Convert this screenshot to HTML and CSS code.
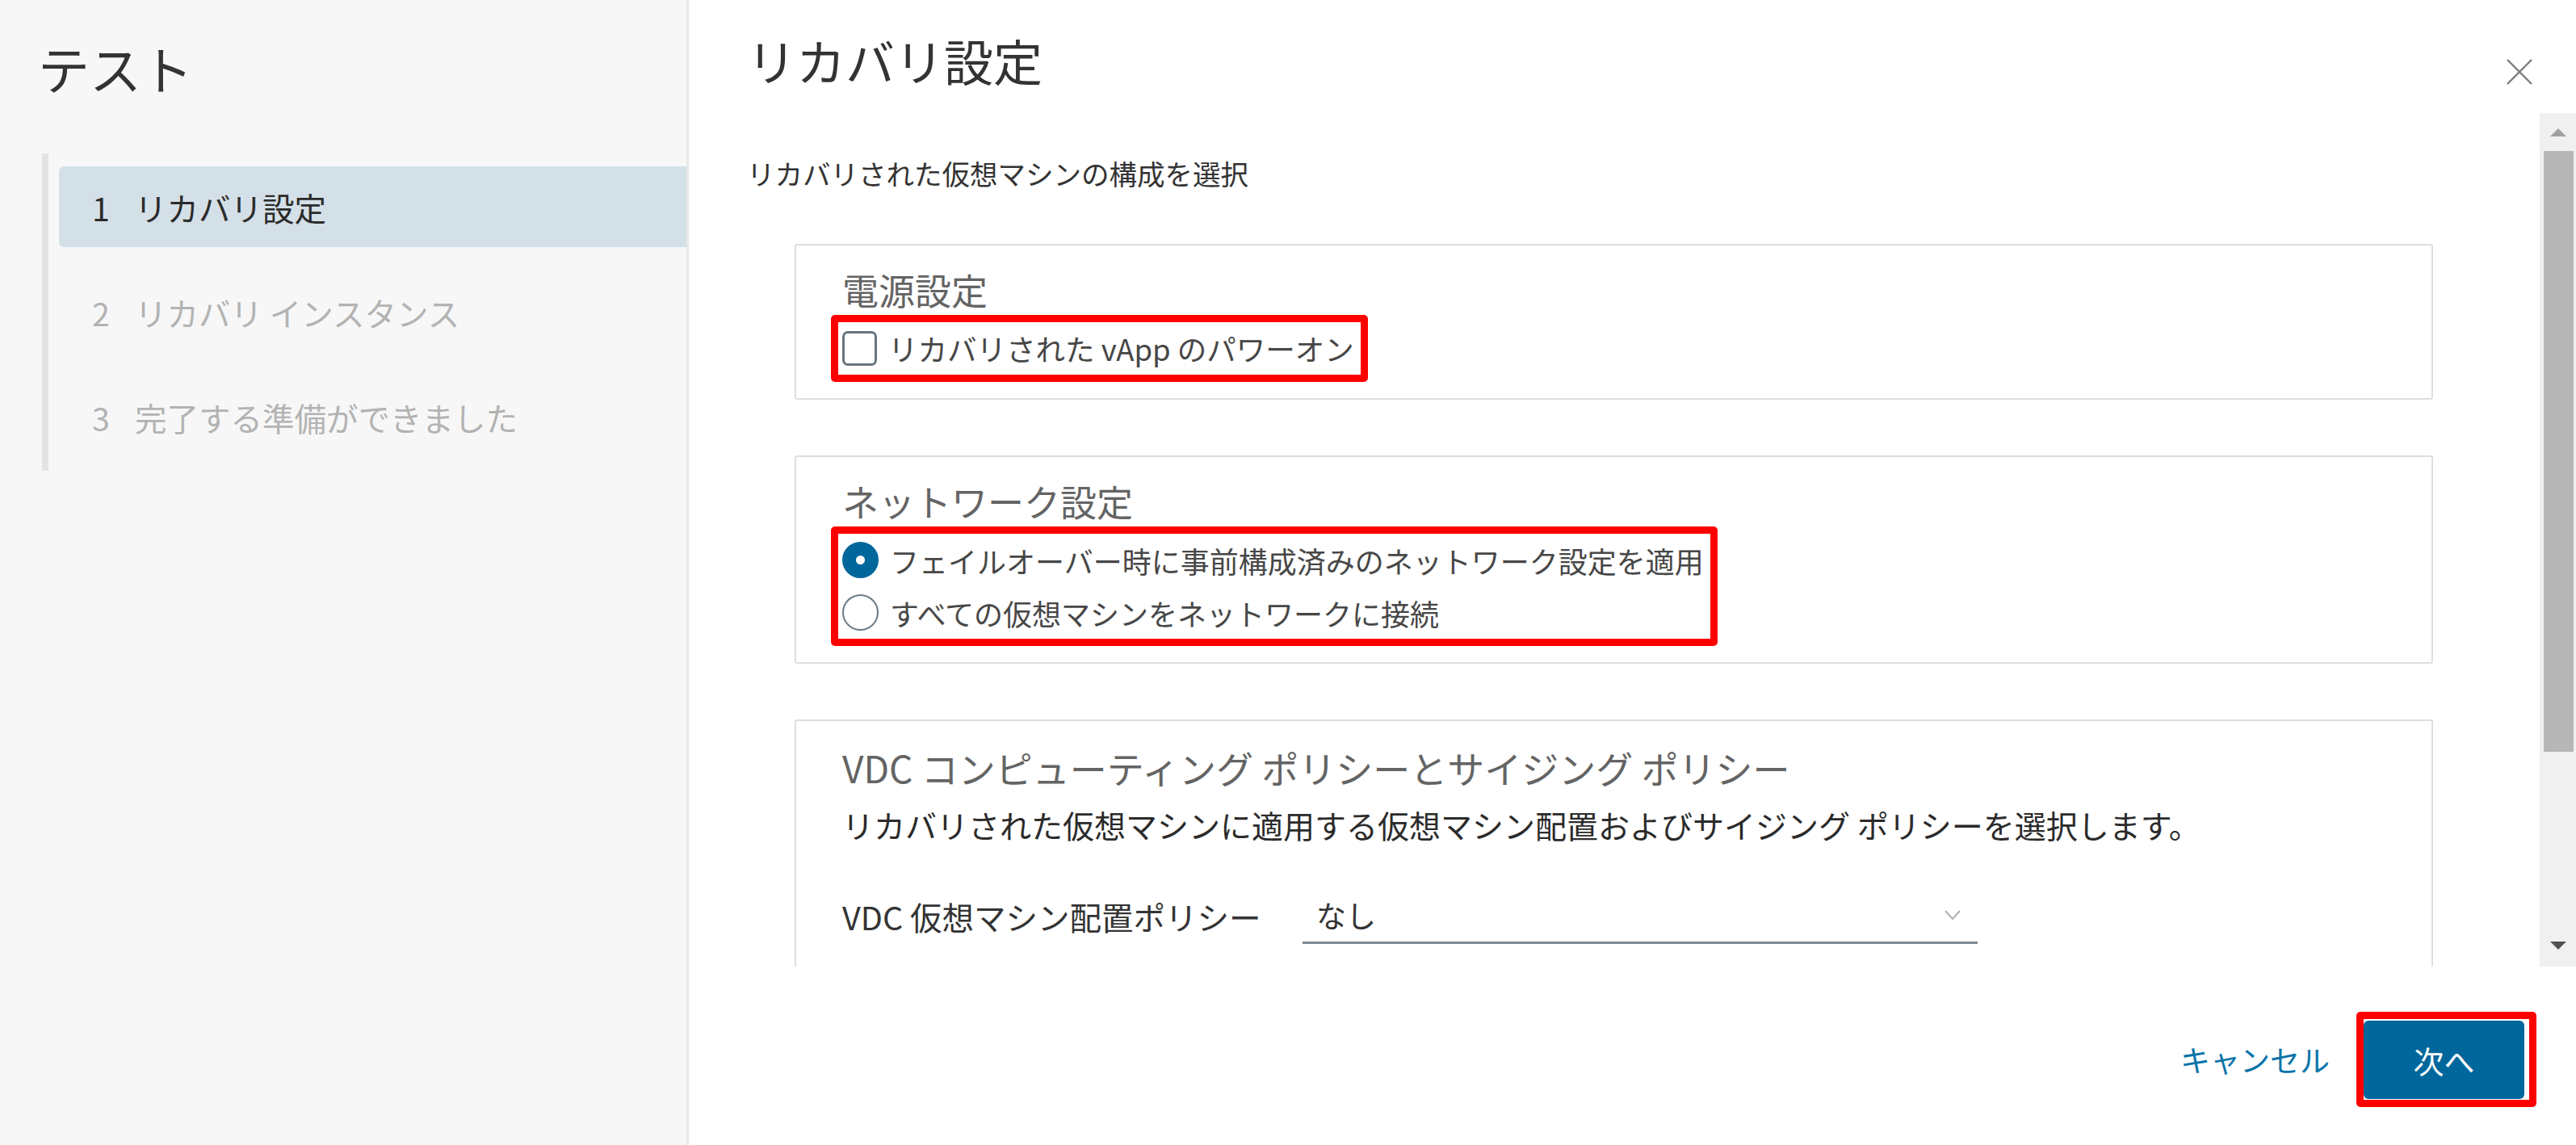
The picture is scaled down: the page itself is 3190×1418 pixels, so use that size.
FILE: index.html
```html
<!DOCTYPE html>
<html lang="ja">
<head>
    <meta charset="UTF-8">
    <meta name="viewport" content="width=device-width, initial-scale=1.0">
    <title>テスト - リカバリ設定</title>
    <link rel="stylesheet" href="styles.css">
</head>
<body>
    <aside class="wizard-nav">
        <h1 class="wizard-title">テスト</h1>
        <ol class="steps">
            <li class="step active"><span class="step-num">1</span>リカバリ設定</li>
            <li class="step"><span class="step-num">2</span>リカバリ インスタンス</li>
            <li class="step"><span class="step-num">3</span>完了する準備ができました</li>
        </ol>
    </aside>

    <main class="wizard-page">
        <header class="page-header">
            <h2 class="page-title">リカバリ設定</h2>
            <svg class="close" width="34" height="34" viewBox="0 0 34 34">
                <path d="M2 2 L32 32 M32 2 L2 32" stroke="#7a7a7a" stroke-width="2.4" fill="none"/>
            </svg>
        </header>

        <div class="page-body">
            <div class="scroll-content">
                <p class="intro">リカバリされた仮想マシンの構成を選択</p>

                <section class="card">
                    <h3 class="card-title">電源設定</h3>
                    <div class="mark mark-check">
                        <label class="option">
                            <span class="checkbox"></span>
                            リカバリされた vApp のパワーオン
                        </label>
                    </div>
                </section>

                <section class="card">
                    <h3 class="card-title">ネットワーク設定</h3>
                    <div class="mark mark-radio">
                        <label class="option">
                            <span class="radio checked"></span>
                            フェイルオーバー時に事前構成済みのネットワーク設定を適用
                        </label>
                        <label class="option">
                            <span class="radio"></span>
                            すべての仮想マシンをネットワークに接続
                        </label>
                    </div>
                </section>

                <section class="card card-last">
                    <h3 class="card-title">VDC コンピューティング ポリシーとサイジング ポリシー</h3>
                    <p class="card-desc">リカバリされた仮想マシンに適用する仮想マシン配置およびサイジング ポリシーを選択します。</p>
                    <div class="field">
                        <span class="field-label">VDC 仮想マシン配置ポリシー</span>
                        <div class="select">
                            <span>なし</span>
                            <svg width="22" height="16" viewBox="0 0 22 16">
                                <path d="M2 3 L11 13 L20 3" stroke="#b0b0b0" stroke-width="2" fill="none"/>
                            </svg>
                        </div>
                    </div>
                </section>
            </div>

            <div class="scrollbar">
                <div class="sb-btn">
                    <svg width="22" height="12" viewBox="0 0 22 12"><path d="M11 1 L21 11 L1 11 Z" fill="#a0a0a0"/></svg>
                </div>
                <div class="sb-thumb"></div>
                <div class="sb-rest"></div>
                <div class="sb-btn sb-down">
                    <svg width="22" height="12" viewBox="0 0 22 12"><path d="M1 1 L21 1 L11 11 Z" fill="#505050"/></svg>
                </div>
            </div>
        </div>

        <footer class="page-footer">
            <a class="link-btn" href="#">キャンセル</a>
            <div class="mark mark-btn">
                <button class="primary-btn">次へ</button>
            </div>
        </footer>
    </main>
</body>
</html>
```

FILE: styles.css
```css
body {
    margin: 0;
    height: 1418px;
    display: flex;
    font-family: "Noto Sans CJK JP", "Noto Sans", sans-serif;
    color: #333;
    background-color: #fff;
    overflow: hidden;
}

/* left: wizard steps */
.wizard-nav {
    width: 850px;
    flex-shrink: 0;
    background-color: #f7f7f7;
    border-right: 3px solid #e8e8e8;
    padding-top: 45px;
}
.wizard-title {
    margin: 0;
    padding-left: 47px;
    font-size: 64px;
    line-height: 76px;
    font-weight: 400;
    color: #333;
}
.steps {
    list-style: none;
    margin: 69px 0 0 52px;
    padding: 16px 0 17px 0;
    border-left: 8px solid #e3e3e3;
    display: flex;
    flex-direction: column;
    gap: 30px;
}
.step {
    height: 100px;
    margin-left: 13px;
    padding-left: 41px;
    display: flex;
    align-items: center;
    font-size: 39.5px;
    color: #b3b3b3;
    border-radius: 6px 0 0 6px;
}
.step.active {
    background-color: #d4e0e7;
    color: #2b2b2b;
}
.step-num {
    display: inline-block;
    width: 53px;
}

/* right: page */
.wizard-page {
    flex: 1;
    display: flex;
    flex-direction: column;
    min-width: 0;
}
.page-header {
    height: 140px;
    box-sizing: border-box;
    padding: 39px 53px 0 72px;
    display: flex;
    justify-content: space-between;
    align-items: flex-start;
}
.page-title {
    margin: 0;
    font-size: 61px;
    line-height: 72px;
    font-weight: 400;
    color: #333;
}
.close {
    margin-top: 33px;
}

.page-body {
    height: 1057px;
    display: flex;
}
.scroll-content {
    flex: 1;
    overflow: hidden;
    padding-left: 72px;
}
.intro {
    margin: 50px 0 0 0;
    font-size: 34.5px;
    line-height: 48px;
    color: #333;
}

.card {
    margin: 64px 132px 0 59px;
    border: 2px solid #dedede;
    border-radius: 3px;
    padding: 28px 57px 20px 57px;
}
.card + .card {
    margin-top: 69px;
}
.card-last {
    padding-top: 30px;
    padding-bottom: 60px;
}
.card-title {
    margin: 0;
    font-size: 45px;
    line-height: 54px;
    font-weight: 400;
    color: #646464;
}
.card-last .card-title {
    font-size: 46px;
}
.card-desc {
    margin: 18px 0 0 0;
    font-size: 39px;
    line-height: 53px;
    color: #2b2b2b;
}

/* red annotation frames */
.mark {
    border: 9px solid #ff0000;
    border-radius: 5px;
}
.mark-check,
.mark-radio {
    width: fit-content;
    margin: 4px 0 0 -14px;
    padding: 0 8px 0 5px;
    display: flex;
    flex-direction: column;
}

.option {
    height: 65px;
    display: flex;
    align-items: center;
    gap: 14px;
    font-size: 36.5px;
    color: #474747;
}
.mark-radio .option {
    font-size: 36px;
}
.checkbox {
    width: 43px;
    height: 43px;
    box-sizing: border-box;
    border: 3px solid #66757f;
    border-radius: 7px;
}
.radio {
    width: 45px;
    height: 45px;
    box-sizing: border-box;
    border: 2px solid #6b7a85;
    border-radius: 50%;
}
.radio.checked {
    border: 17px solid #00679c;
    background-color: #fff;
}

.field {
    margin-top: 51px;
    display: flex;
    align-items: center;
}
.field-label {
    width: 570px;
    font-size: 39.5px;
    color: #333;
}
.select {
    width: 836px;
    height: 70px;
    box-sizing: border-box;
    border-bottom: 3px solid #7b8b95;
    padding: 0 20px 0 17px;
    display: flex;
    align-items: center;
    justify-content: space-between;
    font-size: 37px;
    color: #333;
}

/* fake scrollbar */
.scrollbar {
    width: 45px;
    background-color: #f0f0f0;
    display: flex;
    flex-direction: column;
}
.sb-btn {
    height: 47px;
    display: flex;
    align-items: center;
    justify-content: center;
}
.sb-down {
    height: 52px;
}
.sb-thumb {
    height: 744px;
    margin: 0 3px 0 5px;
    background-color: #b6b6b6;
}
.sb-rest {
    flex: 1;
}

/* footer */
.page-footer {
    flex: 1;
    display: flex;
    justify-content: flex-end;
    align-items: center;
    padding: 8px 49px 0 0;
}
.link-btn {
    font-size: 37px;
    color: #0a74a8;
    text-decoration: none;
    margin-right: 33px;
}
.mark-btn {
    padding: 2px 6px 1px 0;
    display: flex;
}
.primary-btn {
    width: 199px;
    height: 97px;
    border: none;
    border-radius: 6px;
    background-color: #00679c;
    color: #fff;
    font-family: inherit;
    font-size: 38px;
    cursor: pointer;
}
```
